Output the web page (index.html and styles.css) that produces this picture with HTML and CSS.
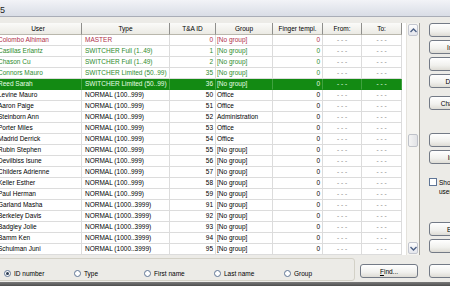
FILE: index.html
```html
<!DOCTYPE html>
<html lang="en">

<head>
    <meta charset="UTF-8">
    <title>Users</title>
    <link rel="stylesheet" href="styles.css">
</head>

<body>
    <div class="titlebar"><span class="title">5</span></div>

    <div class="content">
        <div class="left">
            <div class="list">
                <table class="users">
                    <colgroup>
                        <col class="c-user">
                        <col class="c-type">
                        <col class="c-id">
                        <col class="c-group">
                        <col class="c-finger">
                        <col class="c-from">
                        <col class="c-to">
                    </colgroup>
                    <thead>
                        <tr>
                            <th>User</th>
                            <th>Type</th>
                            <th>T&amp;A ID</th>
                            <th>Group</th>
                            <th>Finger templ.</th>
                            <th>From:</th>
                            <th>To:</th>
                        </tr>
                    </thead>
                    <tbody id="rows"></tbody>
                </table>
                <div class="scrollbar">
                    <div class="sb-btn">
                        <svg width="7" height="5" viewBox="0 0 7 5"><path d="M0.5 4L3.5 1L6.5 4" fill="none" stroke="#4d6185" stroke-width="1.4"/></svg>
                    </div>
                    <div class="sb-thumb"></div>
                    <div class="sb-track"></div>
                    <div class="sb-btn">
                        <svg width="7" height="5" viewBox="0 0 7 5"><path d="M0.5 1L3.5 4L6.5 1" fill="none" stroke="#4d6185" stroke-width="1.4"/></svg>
                    </div>
                </div>
            </div>

            <div class="bottom">
                <div class="search-box">
                    <label class="radio checked"><span class="dot"></span>ID number</label>
                    <label class="radio"><span class="dot"></span>Type</label>
                    <label class="radio"><span class="dot"></span>First name</label>
                    <label class="radio"><span class="dot"></span>Last name</label>
                    <label class="radio"><span class="dot"></span>Group</label>
                </div>
                <button class="btn find"><u>F</u>ind...</button>
            </div>
        </div>

        <div class="side">
            <div class="btn-group">
                <button class="btn side-btn">New</button>
                <button class="btn side-btn">Import...</button>
                <button class="btn side-btn">Edit</button>
                <button class="btn side-btn">Delete all</button>
            </div>
            <div class="btn-group group-b">
                <button class="btn side-btn">Change ID...</button>
            </div>
            <div class="btn-group group-c">
                <button class="btn side-btn">Print</button>
                <button class="btn side-btn">Inactive</button>
            </div>
            <label class="check"><span class="box"></span><span>Show deleted<br>users</span></label>
            <div class="btn-group group-d">
                <button class="btn side-btn">Export...</button>
                <button class="btn side-btn">OK</button>
            </div>
            <div class="btn-group group-e">
                <button class="btn side-btn">Close</button>
            </div>
        </div>
    </div>

    <div class="statusbar"></div>

    <script>
        const users = [
            ['Colombo Alhiman', 'MASTER', 0, '[No group]', 'master'],
            ['Casillas Erlantz', 'SWITCHER Full (1..49)', 1, '[No group]', 'switcher'],
            ['Chason Cu', 'SWITCHER Full (1..49)', 2, '[No group]', 'switcher'],
            ['Connors Mauro', 'SWITCHER Limited (50..99)', 35, '[No group]', 'switcher'],
            ['Reed Sarah', 'SWITCHER Limited (50..99)', 36, '[No group]', 'selected'],
            ['Levine Mauro', 'NORMAL (100..999)', 50, 'Office', ''],
            ['Aaron Paige', 'NORMAL (100..999)', 51, 'Office', ''],
            ['Steinborn Ann', 'NORMAL (100..999)', 52, 'Administration', ''],
            ['Porter Miles', 'NORMAL (100..999)', 53, 'Office', ''],
            ['Madrid Derrick', 'NORMAL (100..999)', 54, 'Office', ''],
            ['Rubin Stephen', 'NORMAL (100..999)', 55, '[No group]', ''],
            ['Devilbiss Isune', 'NORMAL (100..999)', 56, '[No group]', ''],
            ['Childers Adrienne', 'NORMAL (100..999)', 57, '[No group]', ''],
            ['Keller Esther', 'NORMAL (100..999)', 58, '[No group]', ''],
            ['Paul Herman', 'NORMAL (100..999)', 59, '[No group]', ''],
            ['Garland Masha', 'NORMAL (1000..3999)', 91, '[No group]', ''],
            ['Berkeley Davis', 'NORMAL (1000..3999)', 92, '[No group]', ''],
            ['Badgley Jolie', 'NORMAL (1000..3999)', 93, '[No group]', ''],
            ['Bamm Ken', 'NORMAL (1000..3999)', 94, '[No group]', ''],
            ['Schulman Juni', 'NORMAL (1000..3999)', 95, '[No group]', '']
        ];

        const tbody = document.getElementById('rows');
        users.forEach(function (u) {
            const tr = document.createElement('tr');
            if (u[4]) tr.className = u[4];
            tr.innerHTML =
                '<td>' + u[0] + '</td>' +
                '<td>' + u[1] + '</td>' +
                '<td class="num">' + u[2] + '</td>' +
                '<td class="grp">' + u[3] + '</td>' +
                '<td class="num">0</td>' +
                '<td class="dash">- - -</td>' +
                '<td class="dash">- - -</td>';
            tbody.appendChild(tr);
        });
    </script>
</body>

</html>
```

FILE: styles.css
```css
body {
    margin: 0;
    width: 450px;
    height: 286px;
    overflow: hidden;
    background-color: #ecebe7;
    font-family: "Liberation Sans", Arial, sans-serif;
    font-size: 6.5px;
    color: #000;
}

.titlebar {
    height: 16px;
    border-bottom: 1px solid #a9adb7;
    background: linear-gradient(#f2f3f7, #d9dde6);
    display: flex;
    align-items: center;
}

.title {
    font-size: 9px;
    color: #222;
    margin-top: 3px;
}

.content {
    display: flex;
    margin-top: 6px;
    height: 259px;
}

.left {
    margin-left: -5px;
    width: 425px;
    flex-shrink: 0;
    display: flex;
    flex-direction: column;
}

.list {
    height: 232px;
    display: flex;
    background-color: white;
    border-right: 1px solid #a5a39b;
    box-sizing: border-box;
}

.users {
    width: 407px;
    table-layout: fixed;
    border-collapse: separate;
    border-spacing: 0;
    align-self: flex-start;
}

.c-user { width: 87px; }
.c-type { width: 88px; }
.c-id { width: 46px; }
.c-group { width: 57px; }
.c-finger { width: 50px; }
.c-from { width: 39px; }
.c-to { width: 40px; }

.users th {
    font-weight: normal;
    line-height: 11px;
    padding: 0;
    text-align: center;
    white-space: nowrap;
    overflow: hidden;
    background: linear-gradient(#fbfbf9, #ebeae4);
    border-right: 1px solid #8f8f8c;
    border-bottom: 1px solid #b9b7ac;
}

.users td {
    line-height: 10px;
    padding: 0 3px;
    white-space: nowrap;
    overflow: hidden;
    border-right: 1px solid #dcdcdc;
    border-bottom: 1px solid #dcdcdc;
}

.users td.num {
    text-align: right;
    padding-right: 2px;
}

.users td.grp {
    padding-left: 1px;
}

.users td.dash {
    text-align: center;
    color: #8a8a8a;
}

.users tr.master td {
    color: #b0304a;
}

.users tr.switcher td {
    color: #2e8b2e;
}

.users tr.master td.dash,
.users tr.switcher td.dash {
    color: #8a8a8a;
}

.users tr.selected td {
    background-color: #138a13;
    color: #e6ffe6;
    border-bottom-color: #138a13;
    border-right-color: #3fa23f;
}

.scrollbar {
    width: 13px;
    margin-left: auto;
    display: flex;
    flex-direction: column;
    background-color: #f5f4f0;
    border-left: 1px solid #e4e2dc;
    box-sizing: border-box;
    padding: 1px 1px;
}

.sb-btn {
    height: 10px;
    border: 1px solid #c3c6cf;
    border-radius: 2px;
    background: linear-gradient(#fdfdfd, #e4e6ec);
    display: flex;
    align-items: center;
    justify-content: center;
}

.sb-thumb {
    margin-top: 98px;
    height: 11px;
    border: 1px solid #bfc2c9;
    border-radius: 2px;
    background: linear-gradient(90deg, #f4f4f4, #e2e3e6);
}

.sb-track {
    flex: 1;
}

.bottom {
    display: flex;
    margin-top: 3px;
    height: 23px;
}

.search-box {
    width: 360px;
    box-sizing: border-box;
    border: 1px solid #d3d1c7;
    border-radius: 3px;
    display: flex;
    padding: 10px 0 0 8px;
}

.radio {
    width: 70px;
    display: flex;
    align-items: center;
    height: 8px;
}

.radio .dot {
    width: 5px;
    height: 5px;
    border: 1px solid #5f7596;
    border-radius: 50%;
    background-color: white;
    margin-right: 3px;
    display: flex;
    align-items: center;
    justify-content: center;
}

.radio.checked .dot::after {
    content: "";
    width: 3px;
    height: 3px;
    border-radius: 50%;
    background-color: #2c3c52;
}

.btn {
    font-family: "Liberation Sans", Arial, sans-serif;
    font-size: 6.5px;
    color: #000;
    height: 14px;
    padding: 0;
    border: 1px solid #737a86;
    border-radius: 3px;
    background: linear-gradient(#ffffff, #f1f1ee 60%, #dedcd5);
    white-space: nowrap;
}

.find {
    margin-left: 5px;
    margin-top: 6px;
    width: 58px;
}

.side {
    margin-left: 9px;
    width: 80px;
    flex-shrink: 0;
    display: flex;
    flex-direction: column;
}

.btn-group {
    display: flex;
    flex-direction: column;
    gap: 3px;
}

.side-btn {
    width: 60px;
}

.group-b {
    margin-top: 8px;
}

.group-c {
    margin-top: 23px;
}

.group-d {
    margin-top: 26px;
}

.group-e {
    margin-top: 11px;
}

.check {
    margin-top: 14px;
    display: flex;
    align-items: flex-start;
    line-height: 9px;
    white-space: nowrap;
}

.check .box {
    width: 6px;
    height: 6px;
    border: 1px solid #5f7596;
    background-color: white;
    margin-right: 2px;
    flex-shrink: 0;
}

.statusbar {
    height: 4px;
    background: linear-gradient(#7a7a7a, #4e4e4e);
}
```
